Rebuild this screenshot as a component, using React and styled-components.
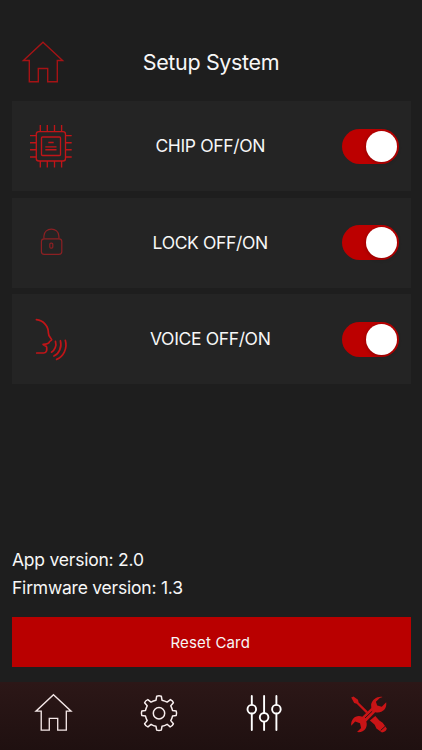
import React from "react";
import styled, { createGlobalStyle } from "styled-components";

const GlobalStyle = createGlobalStyle`
  * { box-sizing: border-box; }
  body {
    margin: 0;
    background: #1e1e1e;
    color: #f7f7f7;
    font-family: Inter, "Liberation Sans", sans-serif;
  }
`;

const Screen = styled.div`
  width: 422px;
  height: 750px;
  display: flex;
  flex-direction: column;
  background: #1e1e1e;
  overflow: hidden;
`;

const Header = styled.header`
  height: 101px;
  padding: 22.5px 12px 0;
  display: grid;
  grid-template-columns: 80px 1fr 80px;
  align-items: center;
`;

const Title = styled.h1`
  margin: 0;
  text-align: center;
  font-size: 21.5px;
  font-weight: 400;
  line-height: 28px;
  letter-spacing: -0.35px;
  white-space: nowrap;
`;

const Icon = styled.svg`
  display: block;
  width: ${(p) => p.$size}px;
  height: ${(p) => p.$size}px;
  fill: none;
  stroke: ${(p) => p.$color};
  stroke-width: ${(p) => p.$weight || 1.3};
`;

const HomeLink = styled.a`
  display: block;
  padding-left: 7px;
`;

const Settings = styled.main`
  flex: 1;
  padding: 0 11.5px 0 12px;
  display: flex;
  flex-direction: column;
  gap: 6.5px;
`;

const Card = styled.section`
  height: 90px;
  flex: none;
  display: grid;
  grid-template-columns: 78px 1fr 80px;
  align-items: center;
  background: #242424;
`;

const CardIcon = styled.div`
  display: flex;
  justify-content: center;
`;

const Label = styled.span`
  text-align: center;
  font-size: 17.5px;
  line-height: 22px;
  letter-spacing: -0.35px;
  white-space: nowrap;
`;

const Switch = styled.button`
  width: 57px;
  height: 35px;
  margin-left: 11px;
  padding: 0 2px;
  border: 0;
  border-radius: 18px;
  background: #bc0000;
  display: flex;
  align-items: center;
  justify-content: flex-end;
`;

const Knob = styled.span`
  width: 31px;
  height: 31px;
  border-radius: 50%;
  background: #fff;
  box-shadow: 0 1px 4px rgba(0, 0, 0, 0.25);
`;

const Footer = styled.footer`
  padding: 0 11.5px 15px 12px;
`;

const Version = styled.p`
  margin: 0;
  font-size: 17.5px;
  line-height: 28.5px;
  letter-spacing: -0.22px;
`;

const ResetButton = styled.button`
  display: block;
  width: 100%;
  height: 50px;
  margin-top: 14.5px;
  padding: 0 2px 0 0;
  border: 0;
  background: #b90000;
  color: #f7f7f7;
  font: 400 15px Inter, "Liberation Sans", sans-serif;
  letter-spacing: 0.15px;
`;

const NavBar = styled.nav`
  height: 68px;
  flex: none;
  display: grid;
  grid-template-columns: repeat(4, 1fr);
  padding: 9px 0 0 1px;
  background: linear-gradient(#2c1717, #1f1010);
`;

const NavItem = styled.a`
  display: flex;
  justify-content: center;
`;

function Home({ color, size, weight }) {
  return (
    <Icon viewBox="0 0 48 48" $size={size} $color={color} $weight={weight}>
      <path d="M24 4.2 43.6 22.5H38.3V43.7H28.7V30.5H19.3V43.7H10.3V22.5H4.4Z" />
    </Icon>
  );
}

function Chip() {
  return (
    <Icon viewBox="0 0 48 48" $size={48} $color="#c01518" $weight={1.35}>
      <rect x="9.3" y="9.6" width="29.2" height="29.4" rx="2.5" />
      <rect x="14.5" y="15" width="19" height="18.5" rx="1" />
      <path d="M13.3 3v6.5M20.3 3v6.5M27.5 3v6.5M34.6 3v6.5M13.3 39v6.5M20.3 39v6.5M27.5 39v6.5M34.6 39v6.5M3 13.6h6.2M3 20.7h6.2M3 27.7h6.2M3 35h6.2M38.5 13.6h6.2M38.5 20.7h6.2M38.5 27.7h6.2M38.5 35h6.2M21.3 20.5h5.4M18.3 24.9h11.2M18.3 27.7h11.2" />
    </Icon>
  );
}

function Lock() {
  return (
    <Icon viewBox="0 0 48 48" $size={48} $color="#8c2023" $weight={1.2}>
      <rect x="14.4" y="19.8" width="20.4" height="15.6" rx="2.8" />
      <path d="M16.9 19.6V17.3C16.9 7.7 31.9 7.7 31.9 17.3V19.6" />
      <rect x="22.8" y="24.1" width="3" height="5" rx="1.2" />
    </Icon>
  );
}

function Voice() {
  return (
    <Icon viewBox="0 0 48 48" $size={48} $color="#c01518" $weight={1.7}>
      <g strokeLinecap="round" strokeLinejoin="round">
        <path d="M9.4 4.7C16.5 5.4 21.5 11.2 21.4 18C21.3 21.2 24.2 23.2 24.7 24.7C24.9 25.5 22.2 26.2 22.3 27C22.4 28 20.1 29.2 16.1 29.4C17.4 30.9 19.6 30.6 19.7 32.2C19.8 34.2 20.3 37.9 16.8 38H9.7" />
        <path d="M28.5 26.4C29.8 30.6 27.8 35.3 24.5 37.2M33.4 25.7C35.3 32.3 31.6 39.2 26.9 41M38.3 25.3C40.8 33.7 36 42.1 29.6 44.4" />
      </g>
    </Icon>
  );
}

function Gear() {
  return (
    <Icon viewBox="0 0 44 44" $size={44} $color="#f8eeee" $weight={1.5}>
      <path strokeLinejoin="round" d="M19.7 5.2Q22 4.5 24.3 5.2L25 9.2Q28 10 30.1 11.1L33.5 8.6Q35.8 9.8 36.4 11.7L33.8 14.8Q35 17 35.5 19.4L39.2 20Q40 22.2 39.2 24.5L35.5 25.1Q35 27.5 33.8 29.6L36.4 32.8Q35.3 35 33.2 35.9L30.1 33.3Q27.5 34.7 25 35.3L24.3 39.1Q22 39.9 19.7 39.1L19 35.3Q16.4 34.7 14.1 33.3L10.9 35.9Q8.7 35 7.6 32.8L10.2 29.6Q9 27.4 8.5 25.1L4.8 24.5Q4 22.2 4.8 20L8.5 19.4Q9 17 10.2 14.8L7.6 11.7Q8.4 9.5 10.8 8.6L14 11.1Q16.3 9.8 19 9.2Z" />
      <circle cx="22" cy="22.2" r="5.7" />
    </Icon>
  );
}

function Sliders() {
  return (
    <Icon viewBox="0 0 44 44" $size={44} $color="#fff" $weight={1.9}>
      <path strokeLinecap="round" d="M9.8 5v8.6M9.8 22.7V39M22.1 5v16.6M22.1 31v8M34.4 5v8.6M34.4 22.7V39" />
      <circle cx="9.8" cy="18.2" r="4.3" />
      <circle cx="22.1" cy="26.3" r="4.3" />
      <circle cx="34.4" cy="18.2" r="4.3" />
    </Icon>
  );
}

function Tools() {
  return (
    <Icon viewBox="0 0 44 44" $size={44} $color="none">
      <g fill="#c91416">
        <path d="M4.2 6.6 6.5 5.4 11 8.7 11.6 11.4 20.8 20.6 19.2 22.2 9.7 12.8 7.2 12Z" />
        <path d="M35.7 6.1C31 4.8 25 8.5 24.1 13.6L24.3 17.1 15.3 25.7C8.8 23.4 3.7 28 4.2 34.7L8.2 30.6 13 32.2 14.1 36.9 10 41.1C17 42.2 21.2 36.4 19.3 30.5L28.2 21.2C34.6 22.7 40.2 18.4 39.2 11.3L34.8 15.8 30.2 14.5 28.9 10.7 32.8 7.1Z" />
        <path d="M28.3 25 32.3 29.5 35.7 31.7 39.8 37.6C39.3 40.1 37.4 41.4 35 41.4L29.4 37.5 27.7 33.7 22.9 29.5Z" />
      </g>
      <path d="M18 27 25.2 20.2M33.7 39.4 38.5 35" stroke="#291515" strokeWidth="1" />
    </Icon>
  );
}

function SettingCard({ icon, label }) {
  return (
    <Card>
      <CardIcon>{icon}</CardIcon>
      <Label>{label}</Label>
      <Switch role="switch" aria-checked="true" aria-label={label}>
        <Knob />
      </Switch>
    </Card>
  );
}

export default function App() {
  return (
    <Screen>
      <GlobalStyle />
      <Header>
        <HomeLink><Home color="#a51315" size={48} weight={1.4} /></HomeLink>
        <Title>Setup System</Title>
      </Header>
      <Settings>
        <SettingCard icon={<Chip />} label="CHIP OFF/ON" />
        <SettingCard icon={<Lock />} label="LOCK OFF/ON" />
        <SettingCard icon={<Voice />} label="VOICE OFF/ON" />
      </Settings>
      <Footer>
        <Version>App version: 2.0</Version>
        <Version>Firmware version: 1.3</Version>
        <ResetButton>Reset Card</ResetButton>
      </Footer>
      <NavBar>
        <NavItem><Home color="#f3e6e6" size={43} weight={1.5} /></NavItem>
        <NavItem><Gear /></NavItem>
        <NavItem><Sliders /></NavItem>
        <NavItem><Tools /></NavItem>
      </NavBar>
    </Screen>
  );
}
